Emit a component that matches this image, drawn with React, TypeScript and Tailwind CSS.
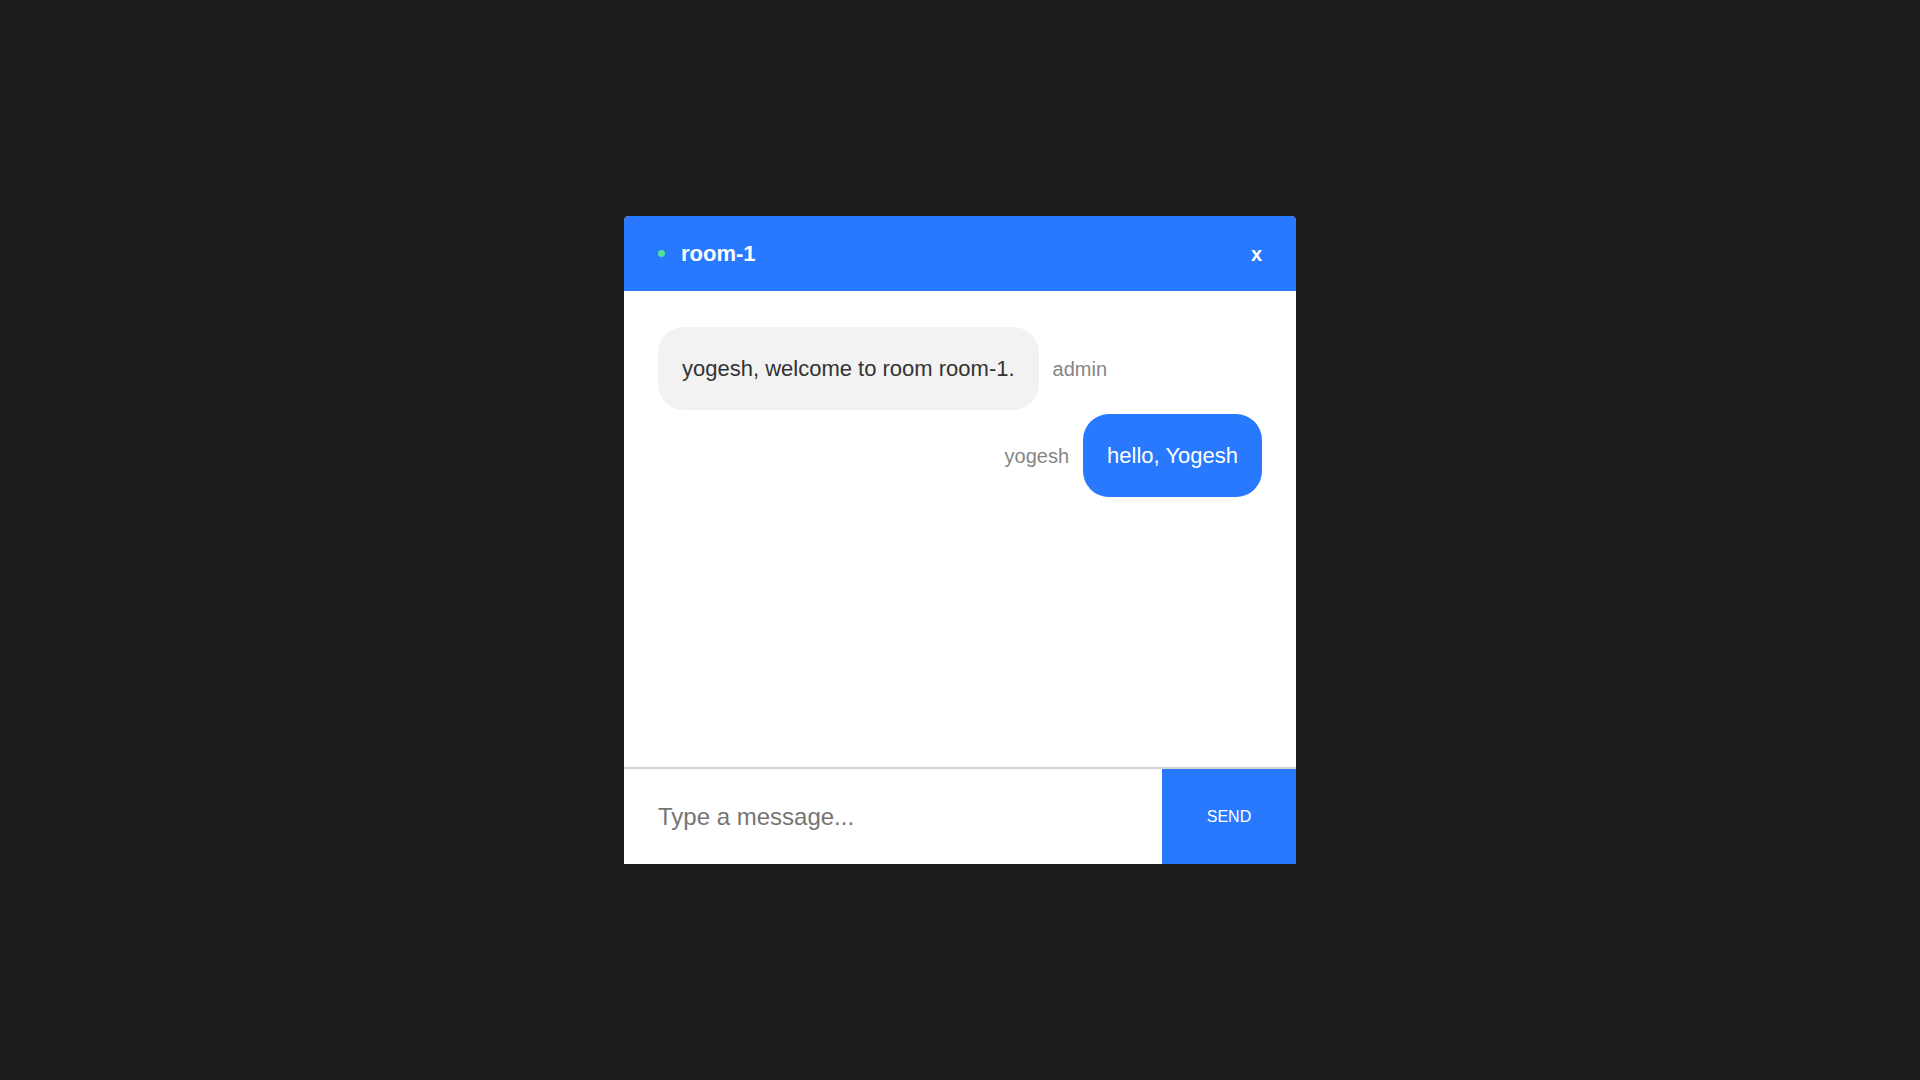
import React from 'react';

type Message = { id: number; user: string; text: string; own: boolean };

const messages: Message[] = [
  { id: 1, user: 'admin', text: 'yogesh, welcome to room room-1.', own: false },
  { id: 2, user: 'yogesh', text: 'hello, Yogesh', own: true },
];

function ChatHeader() {
  return (
    <header className="h-[75px] shrink-0 bg-[#2979ff] flex items-center justify-between pl-[34px] pr-[34px]">
      <div className="flex items-center gap-4">
        <span className="w-[7px] h-[7px] rounded-full bg-[#4fe39a]"></span>
        <h1 className="text-[22px] font-bold text-white leading-none">room-1</h1>
      </div>
      <button className="text-white text-[20px] font-bold leading-none">x</button>
    </header>
  );
}

function MessageRow({ msg }: { msg: Message }) {
  if (msg.own) {
    return (
      <div className="flex items-center justify-end">
        <span className="mr-[14px] text-[20px] text-[#858585]">{msg.user}</span>
        <div className="bg-[#2979ff] text-white rounded-[26px] p-6 text-[22px] leading-[35px]">
          {msg.text}
        </div>
      </div>
    );
  }
  return (
    <div className="flex items-center">
      <div className="bg-[#f2f2f2] text-[#333] rounded-[26px] p-6 text-[22px] leading-[35px]">
        {msg.text}
      </div>
      <span className="ml-[14px] text-[20px] text-[#858585]">{msg.user}</span>
    </div>
  );
}

export default function App() {
  return (
    <div
      className="min-h-screen bg-[#1c1c1e] flex items-center justify-center"
      style={{ fontFamily: '"Liberation Sans", Arial, sans-serif' }}
    >
      <div className="w-[672px] h-[648px] bg-white rounded-t-[5px] overflow-hidden flex flex-col">
        <ChatHeader />
        <div className="flex-1 flex flex-col gap-1 pt-[36px] px-[34px]">
          {messages.map((m) => (
            <MessageRow key={m.id} msg={m} />
          ))}
        </div>
        <form className="h-[97px] shrink-0 flex border-t-2 border-[#d3d3d3]">
          <input
            className="flex-1 px-[34px] text-[24px] text-[#333] placeholder:text-[#757575] outline-none"
            placeholder="Type a message..."
          />
          <button type="button" className="w-[134px] bg-[#2979ff] text-white text-[16px]">
            SEND
          </button>
        </form>
      </div>
    </div>
  );
}
